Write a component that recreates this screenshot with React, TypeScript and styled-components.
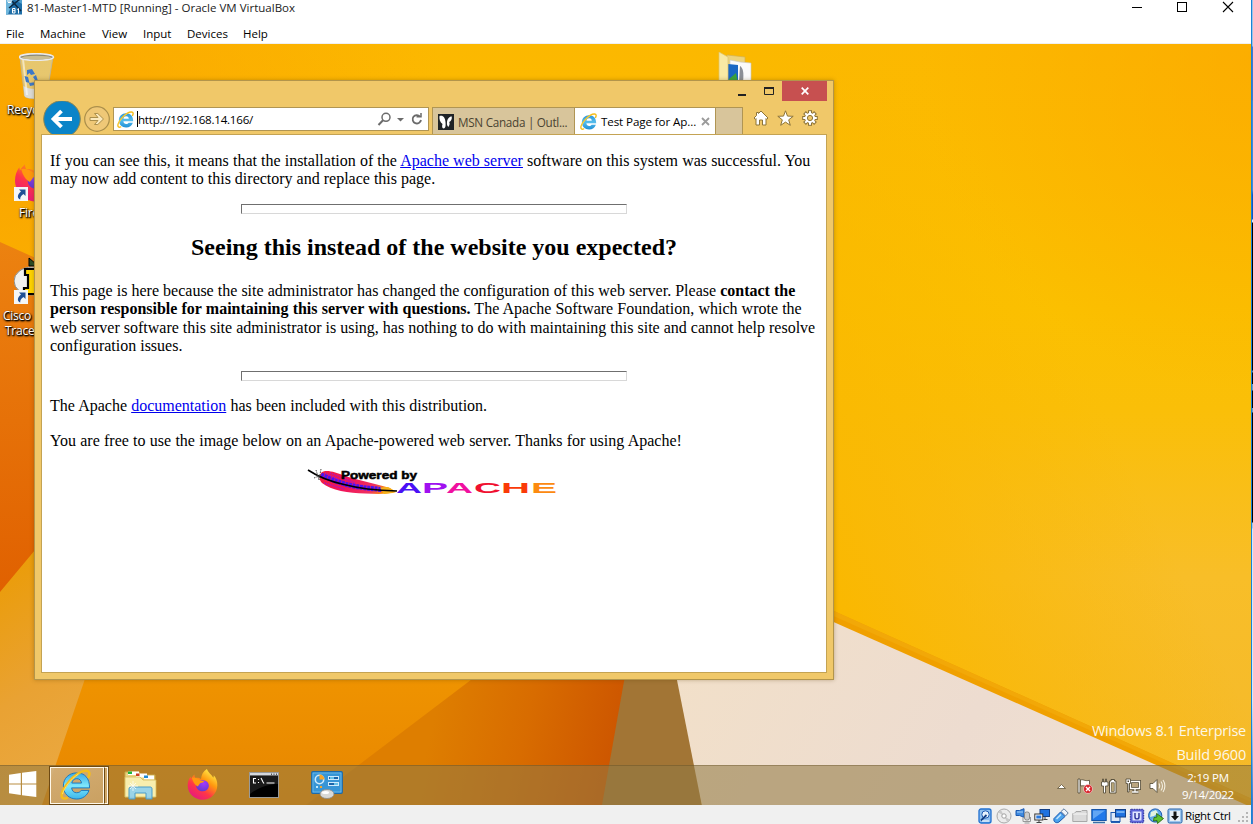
import React from "react";
import styled, { createGlobalStyle } from "styled-components";

const Global = createGlobalStyle`
  *, *::before, *::after { box-sizing: border-box; }
  html, body { margin: 0; padding: 0; }
  body {
    width: 1253px; height: 824px; overflow: hidden;
    font-family: "Open Sans", "Noto Sans", sans-serif;
  }
  svg { display: block; flex: none; }
`;

/* ---------- host window ---------- */
const Screen = styled.div`
  display: flex;
  width: 1253px;
  height: 824px;
  background: #fff;
`;
const HostWindow = styled.div`
  display: flex;
  flex-direction: column;
  width: 1251px;
  height: 824px;
`;
const HostEdge = styled.div`
  width: 1px;
  background: #1883d7;
`;
const OuterStrip = styled.div`
  width: 1px;
  background: linear-gradient(#9cc4e6 0 46px, #4576cc 47px 100px, #3f8ad8 101px 190px, #0e55bd 195px 219px, #dcecf8 220px 222px, #000 223px 370px, #5a86a8 371px 372px, #000 373px 384px, #6f9fbc 384px 390px, #000 391px 408px, #6f9fbc 408px 412px, #000 413px 522px, #a9cbe4 523px 528px, #d7ecfa 529px 700px, #3d7ccc 800px 824px);
`;
const HostTitleBar = styled.div`
  display: flex;
  align-items: flex-start;
  justify-content: space-between;
  height: 20px;
  flex: none;
  padding: 0 17px 0 6px;
`;
const HostTitle = styled.div`
  display: flex;
  gap: 5px;
  height: 16px;
  align-items: center;
`;
const UiText = styled.span<{ $size?: number; $track?: number; $color?: string }>`
  font-size: ${(p) => p.$size ?? 11.5}px;
  letter-spacing: ${(p) => p.$track ?? 0}px;
  color: ${(p) => p.$color ?? "#000"};
  line-height: 16px;
  white-space: nowrap;
`;
const HostControls = styled.div`
  display: flex;
  gap: 34px;
  padding-top: 1px;
`;
const MenuBar = styled.nav`
  display: flex;
  align-items: center;
  gap: 16px;
  height: 24px;
  flex: none;
  padding: 4px 0 0 6px;
  border-bottom: 1px solid #f0f0f0;
`;
const MenuItem = styled(UiText)<{ $w: number }>`
  width: ${(p) => p.$w}px;
`;
const StatusBar = styled.footer`
  display: flex;
  align-items: center;
  justify-content: flex-end;
  gap: 3px;
  height: 19px;
  flex: none;
  background: #f0f0f0;
  padding: 2px 2px 0 0;
`;
const HostKey = styled(UiText)`
  width: 46px;
  margin-left: -1px;
  margin-right: 1px;
`;

/* ---------- guest desktop ---------- */
const Desktop = styled.main`
  position: relative;
  display: flex;
  flex-direction: column;
  justify-content: flex-end;
  height: 761px;
  flex: none;
  overflow: hidden;
`;
const Wallpaper = styled.svg`
  position: absolute;
  inset: 0;
`;
const Shortcut = styled.div<{ $x: number; $y: number }>`
  position: absolute;
  left: ${(p) => p.$x}px;
  top: ${(p) => p.$y}px;
  display: flex;
  flex-direction: column;
`;
const ShortcutLabel = styled.span<{ $indent: number }>`
  margin-left: ${(p) => p.$indent}px;
  font-size: 12px;
  line-height: 15px;
  letter-spacing: -0.25px;
  color: #fff;
  white-space: nowrap;
  text-shadow: 1px 1px 2px #000, 0 1px 2px #000, 1px 1px 1px rgba(0, 0, 0, 0.8);
`;
const Watermark = styled.div`
  position: relative;
  display: flex;
  flex-direction: column;
  align-items: flex-end;
  padding: 0 5px 0 0;
  margin-bottom: -2px;
  color: rgba(255, 255, 255, 0.9);
  line-height: 24px;
`;
const WatermarkLine = styled.span<{ $track: number }>`
  font-size: 14.5px;
  letter-spacing: ${(p) => p.$track}px;
  white-space: nowrap;
`;

/* ---------- taskbar ---------- */
const Taskbar = styled.div`
  position: relative;
  display: flex;
  height: 40px;
  flex: none;
  background: rgba(144, 122, 68, 0.56);
  border-top: 1px solid rgba(90, 70, 30, 0.35);
`;
const StartButton = styled.div`
  width: 49px;
  padding: 5px 0 0 9px;
`;
const ActiveTask = styled.div`
  display: flex;
  width: 60px;
  height: 39px;
  border: 1px solid #6d4a14;
`;
const ActiveFace = styled.div`
  width: 54px;
  border: 1px solid #fff8ea;
  background: linear-gradient(160deg, rgba(226, 196, 155, 0.65), rgba(208, 172, 118, 0.75));
  padding: 1px 0 0 9px;
`;
const ActiveStack = styled.div`
  width: 4px;
  border: 1px solid #fff8ea;
  border-left: 1px solid #6d4a14;
  background: rgba(220, 185, 135, 0.7);
`;
const Task = styled.div<{ $w: number }>`
  display: flex;
  justify-content: center;
  align-items: center;
  width: ${(p) => p.$w}px;
  padding-bottom: 2px;
`;
const Tray = styled.div`
  display: flex;
  flex: 1;
  justify-content: flex-end;
  align-items: center;
  gap: 8px;
`;
const TrayGroup = styled.div`
  display: flex;
  align-items: center;
  gap: 8px;
  margin-right: -2px;
`;
const Clock = styled.div`
  display: flex;
  flex-direction: column;
  align-items: center;
  width: 86px;
  margin-left: -7px;
  padding-top: 2px;
  gap: 1px;
`;

/* ---------- browser ---------- */
const Browser = styled.section`
  position: absolute;
  left: 34px;
  top: 36px;
  width: 800px;
  height: 600px;
  display: flex;
  flex-direction: column;
  padding: 0 6px 6px;
  background: #f0c869;
  border: 1px solid #b3954b;
  box-shadow: 0 0 4px rgba(90, 60, 0, 0.35);
`;
const Caption = styled.div`
  display: flex;
  justify-content: flex-end;
  height: 20px;
  flex: none;
`;
const CaptionButton = styled.div<{ $w: number; $danger?: boolean }>`
  display: flex;
  align-items: center;
  justify-content: center;
  width: ${(p) => p.$w}px;
  height: 20px;
  background: ${(p) => (p.$danger ? "#c75050" : "transparent")};
`;
const NavRow = styled.div`
  display: flex;
  height: 33px;
  flex: none;
`;
const NavButtons = styled.div`
  display: flex;
  width: 72px;
  padding-left: 2px;
  overflow: hidden;
`;
const AddressBar = styled.div`
  display: flex;
  align-items: center;
  width: 316px;
  height: 24px;
  margin-top: 6px;
  padding: 0 5px 0 3px;
  background: #fff;
  border: 1px solid #b09553;
`;
const AddressText = styled.div`
  display: flex;
  align-items: center;
  flex: 1;
  margin-left: 3px;
  padding-top: 1px;
  height: 16px;
  border-left: 1px solid #000;
`;
const Tabs = styled.div`
  display: flex;
  margin: 6px 0 0 3px;
  height: 27px;
  border: 1px solid #b09553;
  border-bottom: 0;
  background: #d8c59b;
`;
const Tab = styled.div<{ $w: number; $active?: boolean }>`
  display: flex;
  align-items: center;
  gap: 4px;
  width: ${(p) => p.$w}px;
  padding: 1px 5px 0 5px;
  background: ${(p) => (p.$active ? "#fff" : "#d8c59b")};
  border-right: 1px solid #b09553;
`;
const TabTitle = styled(UiText)`
  flex: 1;
`;
const NewTab = styled.div`
  width: 26px;
`;
const Commands = styled.div`
  display: flex;
  gap: 8px;
  padding: 9px 0 0 10px;
`;
const Page = styled.article`
  flex: 1;
  padding: 1px 8px 0;
  background: #fff;
  border: 1px solid #c4a353;
  color: #000;
  font-family: "Liberation Serif", "Times New Roman", serif;
  font-size: 16px;
  line-height: 18.4px;
`;
const Paragraph = styled.p<{ $after?: number }>`
  margin: 16px 0 ${(p) => p.$after ?? 16}px;
`;
const Line = styled.span<{ $ws?: number }>`
  display: block;
  white-space: nowrap;
  word-spacing: ${(p) => p.$ws ?? 0}px;
`;
const Heading = styled.h2`
  margin: 20px 0 21px;
  font-size: 24px;
  line-height: 27px;
  text-align: center;
`;
const Rule = styled.hr`
  width: 386px;
  height: 10px;
  margin: 15px auto 16px;
  border: 1px solid;
  border-color: #6f6f6f #d8d8d8 #d8d8d8 #6f6f6f;
`;
const PageLink = styled.a`
  color: #0000ee;
  text-decoration: underline;
`;
const Banner = styled.div`
  display: flex;
  justify-content: center;
  padding: 3px 2px 0 0;
`;

/* ---------- drawings ---------- */
const IELogo = ({ size }: { size: number }) => {
  const small = size < 20;
  return (
    <svg width={size} height={size} viewBox="0 0 32 32">
      <defs>
        <linearGradient id={small ? "ieSmall" : "ieLarge"} x1="0" y1="0" x2="0" y2="1">
          <stop offset="0" stopColor={small ? "#2a96dc" : "#38a8e6"} />
          <stop offset="0.5" stopColor={small ? "#56bdec" : "#7fe8fc"} />
          <stop offset="1" stopColor={small ? "#1f8fd6" : "#3cb6ea"} />
        </linearGradient>
      </defs>
      <path
        d="M30.500 19.500H12c.4 3.400 2.500 5 5.200 5 2.200 0 3.800-.9 4.700-2.400h8C28 27.500 23.500 31 17.200 31 9.300 31 3.500 25.500 3.500 17.500S9.300 4 17.200 4c8.300 0 13.400 5.300 13.300 15.500zM12.200 14.500h10c-.4-3-2.200-4.500-4.900-4.500s-4.600 1.500-5.100 4.500z"
        fill={small ? "url(#ieSmall)" : "url(#ieLarge)"}
        stroke={small ? "none" : "#1a78bf"}
        strokeWidth="1"
      />
      <path d="M7 30C3 31.500.8 29.500 2 25 3.500 19 11 9.500 19 4.500 25 1 31 .8 30.300 5.500 30.200 6.500 29.800 7.500 29.400 8.300" fill="none" stroke="#f5bd1b" strokeWidth="2.600" strokeLinecap="round" />
      <path d="M2.600 26C4 20 11 10.500 19 5.200" fill="none" stroke="#ffe877" strokeWidth=".9" />
    </svg>
  );
};

const FirefoxArt = ({ size }: { size: number }) => (
  <svg width={size} height={size} viewBox="0 0 32 32">
    <defs>
      <linearGradient id="fxFlame" x1="0.85" y1="0.05" x2="0.2" y2="1">
        <stop offset="0" stopColor="#fff44f" />
        <stop offset="0.35" stopColor="#ff980e" />
        <stop offset="0.65" stopColor="#ff3647" />
        <stop offset="1" stopColor="#e31587" />
      </linearGradient>
      <radialGradient id="fxCore" cx="0.6" cy="0.3" r="0.8">
        <stop offset="0" stopColor="#a238ff" />
        <stop offset="1" stopColor="#5b3bc9" />
      </radialGradient>
    </defs>
    <path d="M20.500 0c.8 3 4.500 5.500 6.700 9 .4-.9.500-1.700.4-2.500C30 9 31.500 13 31.300 17 31 25.500 24.300 31.700 16 31.700S.7 25 .7 17c0-3.300 1-6.700 3-9.200l.4 2.300c1-1.600 2.200-3 3.500-4.300 0 1.200.3 2.400 1 3.500 2.200-.5 4.200 0 5.800 1.200C15 6 16.500 2.500 20.500 0z" fill="url(#fxFlame)" />
    <path d="M9.500 16c1-3.500 4-5 7.500-4.500 4 .5 6 3.500 5.500 6.500s-3 5-6.300 5C12 23 9 20 9.500 16z" fill="url(#fxCore)" />
    <path d="M5 9c3-.5 6 .3 8.500 2.500l4 1c-.3 1.500-2 1.800-3.500 2-1.500 1-1.500 2.500-3 3.500C8 16.500 6 13 5 9z" fill="#ff980e" />
  </svg>
);

const ShortcutArrow = ({ y }: { y: number }) => (
  <g transform={`translate(0 ${y})`}>
    <rect x="0" y="0" width="14" height="14" fill="#f4f6f8" />
    <path d="M5 2.500h6.500V9L9.500 7C7 8.500 6.200 10 6.200 12.500 3.300 12 2.700 7.500 7 4.600z" fill="#1f4f96" />
  </g>
);

const BinArt = () => (
  <svg width="36" height="48" viewBox="0 0 36 48">
    <path d="M1 4L5.500 43c1 3 18 4 22 0L34 4z" fill="#e2cd86" fillOpacity=".82" stroke="#b9b6a6" strokeWidth=".8" />
    <path d="M4.500 33c5 4 18 4 24.500 0l-1.700 10c-4 3.500-20 3.500-21.800 0z" fill="#dcdcd8" />
    <path d="M4 6l4 36" stroke="#fff" strokeWidth="2" opacity=".55" />
    <ellipse cx="17.500" cy="4" rx="17" ry="3.300" fill="#8a8878" stroke="#e9eaee" strokeWidth="1.500" />
    <ellipse cx="17.500" cy="4.700" rx="14.500" ry="2" fill="#c9bd91" />
    <g fill="#3c78c8">
      <path d="M8 17l5-1 3 5-4 1-1.500-2L8 22z" />
      <path d="M5.500 23l3.500 1 1.500 6-3.500-1z" />
      <path d="M10 30l7-1-1 3-5 1z" />
      <path d="M14 24l3-2 2 6-3-1z" />
    </g>
  </svg>
);

const CiscoArt = () => (
  <svg width="40" height="48" viewBox="0 0 40 48">
    <path d="M15 1l7 6V1l9 8H15z" fill="#2c4d24" stroke="#000" />
    <ellipse cx="18" cy="24" rx="18" ry="14" fill="#f1f1ee" stroke="#8a8a88" />
    <path d="M11 12h16v6h-4v13h4v6H10v-6h4V18h-3z" fill="#ffd400" stroke="#000" strokeWidth="2.200" />
    <ShortcutArrow y={33} />
  </svg>
);

const FolderArt = () => (
  <svg width="36" height="40" viewBox="0 0 36 40">
    <path d="M9 3l18 2v31H9z" fill="#ecd37c" stroke="#d2b252" strokeWidth=".7" />
    <path d="M12 8l10 2 11 1v26H12z" fill="#fafafa" stroke="#c8c8c8" strokeWidth=".6" />
    <path d="M10 12l10 1v22H10z" fill="#1967c4" />
    <path d="M11 27l7-6 2 10h-9z" fill="#39a33e" />
    <path d="M22 14c3 2 4 6 3 16h-4z" fill="#8b8f96" />
    <path d="M1 0l9 5v35H1z" fill="#f8e9a4" stroke="#dcc473" strokeWidth=".7" />
  </svg>
);

const WallpaperArt = () => (
  <Wallpaper width="1251" height="761" viewBox="0 44 1251 761" preserveAspectRatio="none">
    <defs>
      <linearGradient id="sky" x1="0" y1="0" x2="0" y2="1">
        <stop offset="0" stopColor="#fcb800" />
        <stop offset=".35" stopColor="#fbc000" />
        <stop offset=".48" stopColor="#fabf08" />
        <stop offset=".7" stopColor="#f8be28" />
        <stop offset="1" stopColor="#f4b92c" />
      </linearGradient>
      <radialGradient id="warmRight" gradientUnits="userSpaceOnUse" cx="1251" cy="60" r="330">
        <stop offset="0" stopColor="#fca800" stopOpacity=".65" />
        <stop offset="1" stopColor="#fca800" stopOpacity="0" />
      </radialGradient>
      <radialGradient id="warmLeft" gradientUnits="userSpaceOnUse" cx="0" cy="150" r="450">
        <stop offset="0" stopColor="#fa9e00" stopOpacity=".75" />
        <stop offset="1" stopColor="#fa9e00" stopOpacity="0" />
      </radialGradient>
      <linearGradient id="goldShade" gradientUnits="userSpaceOnUse" x1="834" y1="600" x2="1130" y2="460">
        <stop offset="0" stopColor="#fab800" />
        <stop offset="1" stopColor="#fab800" stopOpacity="0" />
      </linearGradient>
      <linearGradient id="leftRed" x1="0" y1="0" x2="0" y2="1">
        <stop offset="0" stopColor="#ec8210" />
        <stop offset="1" stopColor="#e06000" />
      </linearGradient>
      <linearGradient id="leftGold" x1="0" y1="0" x2=".25" y2="1">
        <stop offset="0" stopColor="#eb9b00" />
        <stop offset=".6" stopColor="#e9a233" />
        <stop offset="1" stopColor="#eaa840" />
      </linearGradient>
      <linearGradient id="deep" gradientUnits="userSpaceOnUse" x1="440" y1="690" x2="620" y2="730">
        <stop offset="0" stopColor="#de7e00" />
        <stop offset=".5" stopColor="#d86c00" />
        <stop offset="1" stopColor="#cd5600" />
      </linearGradient>
      <linearGradient id="cream" x1="0" y1="0" x2="1" y2=".2">
        <stop offset="0" stopColor="#f2e0c8" />
        <stop offset=".6" stopColor="#eddcd0" />
        <stop offset="1" stopColor="#f0e0d2" />
      </linearGradient>
      <linearGradient id="mid" x1="0" y1="0" x2="0" y2="1">
        <stop offset="0" stopColor="#ef9400" />
        <stop offset="1" stopColor="#e88600" />
      </linearGradient>
    </defs>
    <rect x="0" y="44" width="1251" height="761" fill="url(#sky)" />
    <rect x="0" y="44" width="1251" height="761" fill="url(#warmRight)" />
    <rect x="0" y="44" width="700" height="761" fill="url(#warmLeft)" />
    <rect x="700" y="44" width="551" height="761" fill="url(#goldShade)" />
    <path d="M0 242L40 260V600H0z" fill="url(#leftRed)" />
    <path d="M0 592L40 544V670H90L42 805H0z" fill="url(#leftGold)" />
    <path d="M88 670H640V805H42z" fill="url(#mid)" />
    <path d="M484 670H640V805H306z" fill="url(#deep)" />
    <path d="M626 670H680L702 805H602z" fill="#a27535" />
    <path d="M675 670L820 613L1251 804V806H702z" fill="url(#cream)" />
    <path d="M820 604.700L1251 798.500V807L820 616z" fill="#f0a000" />
    <path d="M820 604.700L1251 798.500V802L820 610z" fill="#f2a808" />
  </Wallpaper>
);

const ApacheBanner = () => (
  <svg width="259" height="32" viewBox="0 0 259 32" fontFamily="'Liberation Sans', Arial, sans-serif">
    <defs>
      <linearGradient id="feather" x1="0" y1="0" x2="1" y2=".2">
        <stop offset="0" stopColor="#f3203a" />
        <stop offset=".45" stopColor="#f0145a" />
        <stop offset=".8" stopColor="#f03060" />
        <stop offset="1" stopColor="#ff9a00" />
      </linearGradient>
    </defs>
    <path d="M17 4C21 0 31 3 41 7c13 4 31 8 45 12l6 4c-8 2.500-20 2-31 1.500-16-.5-34-3-43-10.500-3-3-3-7-1-10z" fill="url(#feather)" />
    <path d="M17 6c7 3 14 6 24 9 12 3.500 26 4.500 37 5.500" fill="none" stroke="#4a12f4" strokeWidth="5" strokeDasharray="3 .7" />
    <path d="M21 4l14 7M26 4l25 10M20 14l20 6" stroke="#a010d8" strokeWidth="1.500" strokeDasharray="1 1" />
    <path d="M76 18.500l8-.5 8 5-12 2z" fill="#f6b21c" />
    <path d="M4 1C13 7 24 12 40 15.500c15 4 36 6 53 6.500" fill="none" stroke="#000" strokeWidth="1.600" />
    <path d="M12 1l3 10M17 0l-2 11M10 9l7-3" stroke="#333" strokeWidth=".9" strokeDasharray="1.500 1" />
    <text x="37" y="10" fontSize="11" fontWeight="700" stroke="#000" strokeWidth=".5" textLength="76" lengthAdjust="spacingAndGlyphs">Powered by</text>
    <g fontSize="15" fontWeight="700">
      <text x="92" y="24" fill="#4a10f5" textLength="26" lengthAdjust="spacingAndGlyphs">A</text>
      <text x="118" y="24" fill="#a010f0" textLength="26" lengthAdjust="spacingAndGlyphs">P</text>
      <text x="142" y="24" fill="#f010a0" textLength="27" lengthAdjust="spacingAndGlyphs">A</text>
      <text x="170" y="24" fill="#f01030" textLength="27" lengthAdjust="spacingAndGlyphs">C</text>
      <text x="197" y="24" fill="#fa3a08" textLength="29" lengthAdjust="spacingAndGlyphs">H</text>
      <text x="227" y="24" fill="#fc8a10" textLength="26" lengthAdjust="spacingAndGlyphs">E</text>
    </g>
  </svg>
);

const BackForward = () => (
  <svg width="68" height="33" viewBox="43 101 68 33">
    <circle cx="62" cy="119" r="18.300" fill="#0a84c8" stroke="#8a8656" strokeWidth="1" />
    <path d="M72 119H54M61.500 111L53.500 119l8 8" fill="none" stroke="#fff" strokeWidth="3.800" />
    <circle cx="97" cy="119" r="12.300" fill="#efc877" stroke="#ab8f4b" strokeWidth="1.200" />
    <path d="M90 117.500h8l-3.500-4h3.300l5.700 5.500-5.700 5.500h-3.300l3.500-4h-8z" fill="#fbe9bd" stroke="#ab8f4b" strokeWidth="1" />
  </svg>
);

const Home = () => (
  <svg width="16" height="16" viewBox="0 0 16 16">
    <path d="M8 1l7 7-1.300 1.300L13 8.600V15H9.500v-5h-3v5H3V8.600l-.7.700L1 8l2.500-2.500V2.500h2v1z" fill="#fff" stroke="#8d7437" strokeWidth="1" />
  </svg>
);
const Star = () => (
  <svg width="17" height="17" viewBox="0 0 17 17">
    <path d="M8.500.8l2 5.300 5.700.2-4.500 3.500 1.600 5.500-4.800-3.200-4.800 3.200 1.600-5.500L.8 6.300l5.700-.2z" fill="#fff" stroke="#8d7437" strokeWidth="1" />
  </svg>
);
const Gear = () => (
  <svg width="16" height="16" viewBox="-8 -8 16 16">
    {[0, 45, 90, 135].map((a) => (
      <rect key={a} x="-1.500" y="-7.300" width="3" height="14.600" fill="#fff" stroke="#8d7437" strokeWidth="1" transform={`rotate(${a})`} />
    ))}
    <circle r="5" fill="#fff" />
    <circle r="2.600" fill="#f0c869" stroke="#8d7437" strokeWidth="1" />
  </svg>
);

const ExplorerArt = () => (
  <svg width="33" height="30" viewBox="0 0 33 30">
    <path d="M1 2h14l2 3h14v22H1z" fill="#e9d37f" stroke="#c8a94a" />
    <rect x="4" y="1.500" width="11" height="3.500" fill="#fff" />
    <rect x="4" y="1.500" width="4" height="2.500" fill="#1eb53a" />
    <rect x="12" y="3.500" width="11" height="4" fill="#fff" />
    <rect x="12" y="3.500" width="3.500" height="2.500" fill="#cf3c20" />
    <rect x="20" y="5.500" width="10" height="4" fill="#fff" />
    <rect x="20" y="5.500" width="4" height="2.500" fill="#1e8ad6" />
    <path d="M1 7h15l3 3h13v17H1z" fill="#f8eeae" stroke="#d5ba5e" strokeWidth=".8" />
    <path d="M5 29V19c0-1.500.8-2 2-2h19c1.500 0 2 .7 2 2v10h-6v-6H11v6z" fill="#8fd0ee" fillOpacity=".9" stroke="#4b9cc8" />
    <path d="M9 11v10M4 16h10M6 13l6 6M12 13l-6 6" stroke="#fff" strokeWidth=".9" opacity=".8" />
  </svg>
);
const Terminal = () => (
  <svg width="30" height="26" viewBox="0 0 30 26">
    <rect x=".5" y=".5" width="29" height="25" fill="#000" stroke="#9a9a98" />
    <rect x="1" y="1" width="28" height="2.500" fill="#d5d8dc" />
    <path d="M22.500 1.500v1.500M25 1.500v1.500M27.500 1.500v1.500" stroke="#555" />
    <path d="M1 4h28v8C20 12 10 15 1 22z" fill="#fff" opacity=".1" />
    <path d="M7 6.500H4.500v4.500H7M9.500 7v1M9.500 10v1M12 6l1 2 1 2 1 1.500M17.500 11h8" fill="none" stroke="#fff" strokeWidth="1.100" />
  </svg>
);
const ControlPanel = () => (
  <svg width="32" height="28" viewBox="0 0 32 28">
    <rect x=".7" y=".7" width="30.600" height="21.600" rx="1" fill="#3795d6" stroke="#1e6aa8" strokeWidth="1.200" />
    <rect x="2" y="2" width="28" height="19" fill="none" stroke="#78c3ef" strokeWidth=".7" />
    <circle cx="8.500" cy="8.500" r="4.200" fill="none" stroke="#cfeafb" strokeWidth="1.600" />
    <path d="M8.500 8.500V3.500a5 5 0 015 5z" fill="#f7a62a" />
    <rect x="17.500" y="5.500" width="10" height="3" fill="#1c65aa" stroke="#cfeafb" />
    <rect x="17.500" y="11.500" width="10" height="3" fill="#1c65aa" stroke="#cfeafb" />
    <path d="M19 7h4M23 13h4" stroke="#7fe0fb" strokeWidth="1.500" />
    <rect x="5" y="15" width="2" height="2" fill="#bfe9ff" />
    <rect x="9" y="15" width="2" height="2" fill="#f7a62a" />
    <ellipse cx="16" cy="23" rx="7" ry="4.500" fill="#d9d9d6" stroke="#8c8c88" strokeWidth=".8" />
    <ellipse cx="14.500" cy="21.500" rx="3.500" ry="1.500" fill="#fff" />
  </svg>
);

const VmIcon = () => (
  <svg width="16" height="16" viewBox="0 0 16 16">
    <rect x="0" y="-2" width="16" height="16.500" fill="#1f6fa8" />
    <path d="M0-2h8L2 14.500H0z" fill="#6fb6dc" />
    <path d="M9 0h7v4z" fill="#4f9fce" />
    <path d="M3 8L14-1M6 1l9 10" stroke="#0d2b45" strokeWidth="1.600" fill="none" />
    <path d="M1 1h5M2 2.500h3" stroke="#fff" strokeWidth="1" />
    <path d="M6.500 8.500h2.500v4.500H6.500zM6.500 10.700h2.500M12.500 8.500v5M11.300 9.500L12.500 8.500" stroke="#fff" fill="none" />
  </svg>
);

const MsnButterfly = () => (
  <svg width="16" height="16" viewBox="0 0 16 16">
    <rect width="16" height="16" fill="#1f2326" />
    <path d="M1.500 2C5 .8 7.200 3.500 7.500 8c.2 3.200.5 6-2 6.500C4 14.200 3.800 12 4.500 10 2 8.500 1 5 1.500 2z" fill="#fff" />
    <path d="M9 8c.3-3 2-5.500 4.800-5.500.3 3-.8 4.800-2.600 5.500.8 1.500.4 3.500-1 5C9 11.500 8.800 10 9 8z" fill="#fff" />
  </svg>
);

const TrayIcons = () => (
  <TrayGroup>
    <svg width="12" height="16" viewBox="0 0 12 16">
      <path d="M.5 10.500L4.500 6.500l4 4z" fill="#fff" stroke="#63573a" strokeWidth=".8" />
    </svg>
    <svg width="16" height="16" viewBox="0 0 16 16">
      <path d="M1 1h2v14H1z" fill="#fff" stroke="#4d4530" strokeWidth=".8" />
      <path d="M3.500 2c3-1 4 1.500 9 .3V8c-4 1-6-1-9 0z" fill="#fff" stroke="#4d4530" strokeWidth=".8" />
      <circle cx="11" cy="11" r="4.500" fill="#d8242c" stroke="#fff" strokeWidth=".5" />
      <path d="M9 9l4 4M13 9l-4 4" stroke="#fff" strokeWidth="1.400" />
    </svg>
    <svg width="16" height="16" viewBox="0 0 16 16">
      <path d="M8.500 3h1.500V1.500h3.500V3H15v12H8.500z" fill="#fff" stroke="#4d4530" strokeWidth=".9" />
      <rect x="10.200" y="4.800" width="3" height="8.500" fill="#b9a77a" stroke="#4d4530" strokeWidth=".6" />
      <path d="M1.500 1h1v3h2V1h1v3H7v4H4.500v7h-2V8H.5V4h1z" fill="#fff" stroke="#4d4530" strokeWidth=".8" />
    </svg>
    <svg width="16" height="16" viewBox="0 0 16 16">
      <path d="M5.500 3.500h9v7H5.500zM10 10.500v3M7 14h6.500" fill="none" stroke="#4d4530" strokeWidth="2.800" />
      <path d="M5.500 3.500h9v7H5.500zM10 10.500v3M7 14h6.500" fill="none" stroke="#fff" strokeWidth="1.300" />
      <path d="M1 1h4.500v4.500H4V14H2.500V5.500H1z" fill="#fff" stroke="#4d4530" strokeWidth=".8" />
      <rect x="2.500" y="2.500" width="1.500" height="1.500" fill="#4d4530" />
    </svg>
    <svg width="17" height="16" viewBox="0 0 17 16">
      <path d="M1 5.500h3l4-4v13l-4-4H1z" fill="#fff" stroke="#4d4530" strokeWidth=".8" />
      <path d="M10 5.500c1 1.500 1 3.500 0 5M12 3.500c2 2.500 2 6.500 0 9M14 2c2.500 3.500 2.500 8.500 0 12" fill="none" stroke="#f4efe0" strokeWidth="1.100" />
    </svg>
  </TrayGroup>
);

const StatusIcons = () => (
  <>
    <svg width="16" height="16" viewBox="0 0 16 16">
      <rect x="2" y="1" width="12" height="14" rx="2" fill="#8fc0f0" stroke="#1f6fd0" strokeWidth="1.300" />
      <circle cx="8.500" cy="6.500" r="3.700" fill="#e8f3fd" stroke="#1b58b0" />
      <path d="M4 12.500L9.500 7" stroke="#123f86" strokeWidth="1.800" />
      <path d="M5 13h7" stroke="#fff" />
    </svg>
    <svg width="16" height="16" viewBox="0 0 16 16">
      <circle cx="8" cy="8" r="7" fill="#ececec" stroke="#a9a9a9" />
      <path d="M8 8L2.500 4.500A7 7 0 015 2zM8 8l5.500 3.500A7 7 0 0111 14z" fill="#c9c9c9" />
      <circle cx="8" cy="8" r="2.200" fill="#fff" stroke="#a0a0a0" />
    </svg>
    <svg width="16" height="16" viewBox="0 0 16 16">
      <path d="M1 2.500h3.500L9 .7v8.600L4.500 7.500H1z" fill="#3f8be0" stroke="#1b58b0" />
      <path d="M2 4h6" stroke="#a9d0f6" />
      <rect x="9.500" y="4" width="5" height="8" rx="2" fill="#ccc" stroke="#8a8a8a" />
      <path d="M8 9v4.500h7.500V9M9.500 15h5" fill="none" stroke="#999" />
    </svg>
    <svg width="16" height="16" viewBox="0 0 16 16">
      <rect x="6" y="1.500" width="9.500" height="7" fill="#1f72e0" stroke="#123f86" />
      <path d="M11 9v2.500M9.500 11.500h4" stroke="#444" />
      <rect x=".8" y="6" width="8" height="6" fill="#fff" stroke="#333" />
      <rect x="2.300" y="7.500" width="5" height="3" fill="#2a7ae0" />
      <path d="M5 12v2M2.500 14.500h5" stroke="#444" />
    </svg>
    <svg width="16" height="16" viewBox="0 0 16 16">
      <path d="M11 .8L15.200 5 12.500 8 8 3.500z" fill="#eef4fb" stroke="#5e7a9c" />
      <path d="M7.500 4l4.500 4.500-6 5.500c-2 1.500-6 .5-5-3.500z" fill="#4aa3ee" stroke="#1b58b0" />
      <path d="M3.500 11L8 6.500" stroke="#c4e5ff" strokeWidth="1.500" />
    </svg>
    <svg width="16" height="16" viewBox="0 0 16 16">
      <path d="M.8 5.500h1.500L4 3.500h5L10 2.500h5v11H.8z" fill="#dadada" stroke="#a8a8a8" />
      <path d="M1 6h14" stroke="#f6f6f6" />
    </svg>
    <svg width="16" height="16" viewBox="0 0 16 16">
      <rect x=".8" y="1.500" width="14.400" height="11" fill="#2078ea" stroke="#1654a6" />
      <path d="M2 2.500h12L2 11z" fill="#62a6f4" />
      <path d="M2 14.500h12" stroke="#3a6ea8" strokeWidth="1.500" />
    </svg>
    <svg width="16" height="16" viewBox="0 0 16 16">
      <rect x="1" y="4.500" width="9" height="9" fill="#dce9f8" stroke="#1b58b0" />
      <path d="M1 14.300h9" stroke="#1b58b0" strokeWidth="1.300" />
      <rect x="5.500" y="1.500" width="10" height="7.500" fill="#1f72e0" stroke="#123f86" />
      <path d="M6.500 3h8v2h-8z" fill="#6fadf2" />
    </svg>
    <svg width="16" height="16" viewBox="0 0 16 16">
      <rect x="1.300" y="1.300" width="13.400" height="13.400" rx="1" fill="#5b62d8" stroke="#2a2f9a" strokeDasharray="1.500 1" />
      <rect x="3.500" y="3.500" width="9" height="9" fill="#dfe3ff" />
      <path d="M6 5v4c0 2.500 4 2.500 4 0V5" fill="none" stroke="#2a2f9a" strokeWidth="1.400" />
    </svg>
    <svg width="16" height="16" viewBox="0 0 16 16">
      <circle cx="7.200" cy="7.500" r="6.600" fill="#5ca9ea" stroke="#1b58b0" />
      <path d="M3 4l5-2 2 3-4 3-4 1zM4 11l4-1 1 3z" fill="#e2f3e0" />
      <path d="M8.500 5.500L15.500 10.500 9.500 15.500 9 12.500 5.500 13 6 9.500l3-.5z" fill="#5cc32e" stroke="#2b6a10" strokeWidth=".9" />
    </svg>
    <svg width="16" height="16" viewBox="0 0 16 16">
      <rect x="1" y="1" width="14" height="14" rx="1.500" fill="#9cc6ee" stroke="#2560a8" />
      <rect x="3" y="3" width="10" height="10" fill="#e6eef6" />
      <path d="M6.500 3.500h3V8H12l-4 4.500L4 8h2.500z" fill="#111" />
    </svg>
  </>
);

const menus: [string, number][] = [
  ["File", 18],
  ["Machine", 46],
  ["View", 25],
  ["Input", 28],
  ["Devices", 40],
  ["Help", 26],
];

export default function App() {
  return (
    <Screen>
      <Global />
      <HostWindow>
        <HostTitleBar>
          <HostTitle>
            <VmIcon />
            <UiText $size={11.5} $track={0.01} $color="#222">81-Master1-MTD [Running] - Oracle VM VirtualBox</UiText>
          </HostTitle>
          <HostControls>
            <svg width="12" height="12" viewBox="0 0 12 12"><path d="M2 6.500h10" stroke="#000" /></svg>
            <svg width="12" height="12" viewBox="0 0 12 12"><rect x="1.500" y="1.500" width="9" height="9" fill="none" stroke="#000" /></svg>
            <svg width="12" height="12" viewBox="0 0 12 12"><path d="M1 1l10 10M11 1L1 11" stroke="#000" strokeWidth="1.100" /></svg>
          </HostControls>
        </HostTitleBar>
        <MenuBar>
          {menus.map(([label, w]) => (
            <MenuItem key={label} $w={w} $size={11.5} $track={0}>{label}</MenuItem>
          ))}
        </MenuBar>

        <Desktop>
          <WallpaperArt />
          <Shortcut $x={19} $y={9}>
            <BinArt />
          </Shortcut>
          <Shortcut $x={7} $y={58}>
            <ShortcutLabel $indent={0}>Recycle</ShortcutLabel>
          </Shortcut>
          <Shortcut $x={14} $y={112}>
            <FirefoxArt size={46} />
          </Shortcut>
          <Shortcut $x={14} $y={143}>
            <svg width="14" height="18"><ShortcutArrow y={0} /></svg>
            <ShortcutLabel $indent={5}>Firefox</ShortcutLabel>
          </Shortcut>
          <Shortcut $x={14} $y={213}>
            <CiscoArt />
          </Shortcut>
          <Shortcut $x={3} $y={264}>
            <ShortcutLabel $indent={0}>Cisco</ShortcutLabel>
            <ShortcutLabel $indent={2}>Tracer</ShortcutLabel>
          </Shortcut>
          <Shortcut $x={718} $y={8}>
            <FolderArt />
          </Shortcut>

          <Browser>
            <Caption>
              <CaptionButton $w={26}>
                <svg width="9" height="9" viewBox="0 0 9 9"><rect y="7" width="8" height="2" fill="#222" /></svg>
              </CaptionButton>
              <CaptionButton $w={27}>
                <svg width="10" height="8" viewBox="0 0 10 8"><path d="M.5 1h9v6.500h-9z" fill="none" stroke="#222" /><path d="M0 1h10" stroke="#222" strokeWidth="2" /></svg>
              </CaptionButton>
              <CaptionButton $w={45} $danger>
                <svg width="8" height="8" viewBox="0 0 8 8"><path d="M.7.7l6.600 6.600M7.300.7L.7 7.300" stroke="#fff" strokeWidth="1.700" /></svg>
              </CaptionButton>
            </Caption>
            <NavRow>
              <NavButtons><BackForward /></NavButtons>
              <AddressBar>
                <IELogo size={17} />
                <AddressText><UiText $size={11.6} $track={-0.24}>http://192.168.14.166/</UiText></AddressText>
                <svg width="46" height="16" viewBox="0 0 46 16" fill="none" stroke="#6b6b6b">
                  <circle cx="9" cy="6.300" r="4" strokeWidth="1.500" />
                  <path d="M6 9.300L1.500 14" strokeWidth="2" />
                  <path d="M20 7h7L23.500 10.500z" fill="#6b6b6b" stroke="none" />
                  <path d="M43 5.500A4.200 4.200 0 1044 9" strokeWidth="1.800" />
                  <path d="M39.500 5.800h4.500V2" strokeWidth="1.500" />
                </svg>
              </AddressBar>
              <Tabs>
                <Tab $w={142}>
                  <MsnButterfly />
                  <TabTitle $color="#4a4332" $size={11.7} $track={-0.28}>MSN Canada | Outl...</TabTitle>
                </Tab>
                <Tab $w={141} $active>
                  <IELogo size={17} />
                  <TabTitle $size={11.6} $track={-0.1}>Test Page for Ap...</TabTitle>
                  <svg width="9" height="9" viewBox="0 0 9 9"><path d="M1 1l7 7M8 1L1 8" stroke="#9b9b9b" strokeWidth="1.800" /></svg>
                </Tab>
                <NewTab />
              </Tabs>
              <Commands>
                <Home />
                <Star />
                <Gear />
              </Commands>
            </NavRow>
            <Page>
              <Paragraph $after={15}>
                <Line $ws={0.11}>If you can see this, it means that the installation of the <PageLink>Apache web server</PageLink> software on this system was successful. You</Line>
                <Line>may now add content to this directory and replace this page.</Line>
              </Paragraph>
              <Rule />
              <Heading>Seeing this instead of the website you expected?</Heading>
              <Paragraph>
                <Line $ws={0.06}>This page is here because the site administrator has changed the configuration of this web server. Please <b>contact the</b></Line>
                <Line $ws={0.13}><b>person responsible for maintaining this server with questions.</b> The Apache Software Foundation, which wrote the</Line>
                <Line>web server software this site administrator is using, has nothing to do with maintaining this site and cannot help resolve</Line>
                <Line>configuration issues.</Line>
              </Paragraph>
              <Rule />
              <Paragraph>
                <Line $ws={0.15}>The Apache <PageLink>documentation</PageLink> has been included with this distribution.</Line>
              </Paragraph>
              <Paragraph>
                <Line $ws={0.26}>You are free to use the image below on an Apache-powered web server. Thanks for using Apache!</Line>
              </Paragraph>
              <Banner><ApacheBanner /></Banner>
            </Page>
          </Browser>

          <Watermark>
            <WatermarkLine $track={-0.24}>Windows 8.1 Enterprise</WatermarkLine>
            <WatermarkLine $track={-0.18}>Build 9600</WatermarkLine>
          </Watermark>
          <Taskbar>
            <StartButton>
              <svg width="28" height="26" viewBox="0 0 28 26" fill="#fff">
                <path d="M0 3.700L11.800 2v10.400H0zM13 1.800L27.300 0v12.400H13zM0 13.600h11.800V24L0 22.300zM13 13.600h14.300V26L13 24.200z" />
              </svg>
            </StartButton>
            <ActiveTask>
              <ActiveFace><IELogo size={31} /></ActiveFace>
              <ActiveStack />
            </ActiveTask>
            <Task $w={63}><ExplorerArt /></Task>
            <Task $w={61}><FirefoxArt size={31} /></Task>
            <Task $w={62}><Terminal /></Task>
            <Task $w={64}><ControlPanel /></Task>
            <Tray>
              <TrayIcons />
              <Clock>
                <UiText $color="#fff" $track={-0.2}>2:19 PM</UiText>
                <UiText $color="#fff" $track={-0.3}>9/14/2022</UiText>
              </Clock>
            </Tray>
          </Taskbar>
        </Desktop>

        <StatusBar>
          <StatusIcons />
          <HostKey $track={-0.38}>Right Ctrl</HostKey>
          <svg width="14" height="14" viewBox="0 0 14 14" fill="#b5b5b5">
            <path d="M11 3h2v2h-2zM11 7h2v2h-2zM7 7h2v2H7zM11 11h2v2h-2zM7 11h2v2H7zM3 11h2v2H3z" />
          </svg>
        </StatusBar>
      </HostWindow>
      <HostEdge />
      <OuterStrip />
    </Screen>
  );
}
